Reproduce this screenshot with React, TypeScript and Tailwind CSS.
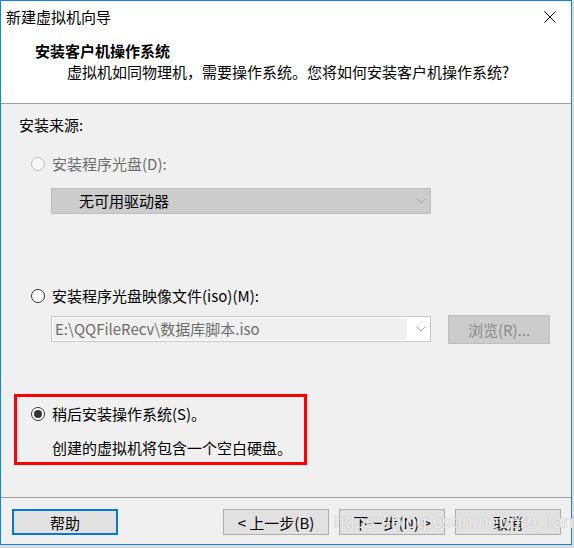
const font = { fontFamily: '"Noto Sans CJK SC", "Microsoft YaHei", sans-serif' };

type RadioProps = { checked?: boolean; disabled?: boolean };

const Radio: React.FC<RadioProps> = ({ checked, disabled }) => (
  <span
    className={`flex h-[14px] w-[14px] shrink-0 items-center justify-center rounded-full border ${
      disabled ? "border-[#bcbcbc] bg-[#f7f7f7]" : "border-[#333333] bg-white"
    }`}
  >
    {checked && <span className="h-[8px] w-[8px] rounded-full bg-[#333333]" />}
  </span>
);

const Chevron = ({ color }: { color: string }) => (
  <svg width="10" height="6" viewBox="0 0 10 6" className="shrink-0">
    <path d="M0.5 0.5 L5 5 L9.5 0.5" fill="none" stroke={color} strokeWidth="1" />
  </svg>
);

const Btn: React.FC<{ label: string; primary?: boolean }> = ({ label, primary }) => (
  <button
    className={`flex h-[26px] w-[106px] items-center justify-center bg-[#e1e1e1] text-[15px] leading-none text-black ${
      primary ? "border-2 border-[#0078d7]" : "border border-[#adadad]"
    }`}
  >
    {label}
  </button>
);

export default function App() {
  return (
    <div className="h-[548px] w-[574px] bg-[#dcdcdc]" style={font}>
      <div className="relative flex h-[545px] w-[572px] flex-col border border-[#1883d7] bg-[#f0f0f0] text-black">
        {/* header */}
        <div className="h-[103px] border-b border-[#a0a0a0] bg-white">
          <div className="flex h-[32px] items-center justify-between pl-[5px] pr-[15px]">
            <span className="text-[15px] leading-[20px]">新建虚拟机向导</span>
            <svg width="12" height="12" viewBox="0 0 12 12">
              <path d="M0.5 0.5 L11.5 11.5 M11.5 0.5 L0.5 11.5" stroke="#000" strokeWidth="1" />
            </svg>
          </div>
          <div className="mt-[8px] pl-[34px] text-[15px] font-bold leading-[20px]">安装客户机操作系统</div>
          <div className="mt-[1px] pl-[66px] text-[15px] leading-[20px]">
            虚拟机如同物理机，需要操作系统。您将如何安装客户机操作系统?
          </div>
        </div>

        {/* body */}
        <div className="flex flex-col pl-[18px] pt-[11px] text-[15px] leading-[20px]">
          <div>安装来源:</div>

          <div className="ml-[12px] mt-[19px] flex items-center gap-[7px] text-[#6d6d6d]">
            <Radio disabled />
            <span>安装程序光盘(D):</span>
          </div>
          <div className="ml-[32px] mt-[14px] flex h-[26px] w-[380px] items-center justify-between border border-[#bfbfbf] bg-[#cccccc] pl-[27px] pr-[4px]">
            <span>无可用驱动器</span>
            <Chevron color="#a6a6a6" />
          </div>

          <div className="ml-[12px] mt-[72px] flex items-center gap-[7px]">
            <Radio />
            <span>安装程序光盘映像文件(iso)(M):</span>
          </div>
          <div className="ml-[32px] mt-[9px] flex items-start gap-[17px]">
            <div className="mt-[1px] flex h-[26px] w-[380px] items-center border border-[#c8c8c8] bg-white p-[1px] pr-[4px]">
              <div className="flex h-full w-[354px] items-center bg-[#f0f0f0] pl-[2px] text-[#6d6d6d]">
                E:\QQFileRecv\数据库脚本.iso
              </div>
              <div className="ml-auto">
                <Chevron color="#a6a6a6" />
              </div>
            </div>
            <button className="flex h-[29px] w-[102px] items-center justify-center border border-[#bfbfbf] bg-[#cccccc] text-[#8a8a8a]">
              浏览(R)...
            </button>
          </div>

          <div className="-ml-[5px] mt-[50px] flex h-[71px] w-[293px] flex-col border-[3px] border-[#ff0000] pl-[14px] pt-[7px]">
            <div className="flex items-center gap-[7px]">
              <Radio checked />
              <span>稍后安装操作系统(S)。</span>
            </div>
            <div className="mt-[14px] pl-[21px]">创建的虚拟机将包含一个空白硬盘。</div>
          </div>
        </div>

        {/* footer */}
        <div className="mt-auto flex h-[47px] items-start justify-between border-t border-[#a0a0a0] pl-[11px] pr-[10px] pt-[11px]">
          <Btn label="帮助" primary />
          <div className="flex gap-[10px]">
            <Btn label="< 上一步(B)" />
            <Btn label="下一步(N) >" />
            <Btn label="取消" />
          </div>
        </div>

        <span
          className="pointer-events-none absolute left-[333px] top-[509px] text-[19px] leading-[24px] text-white/80"
          style={{ fontFamily: '"Liberation Sans", Arial, sans-serif', textShadow: "0 0 1px #9a9a9a" }}
        >
          https://blog.csdn.net/pro_fan
        </span>
      </div>
    </div>
  );
}
